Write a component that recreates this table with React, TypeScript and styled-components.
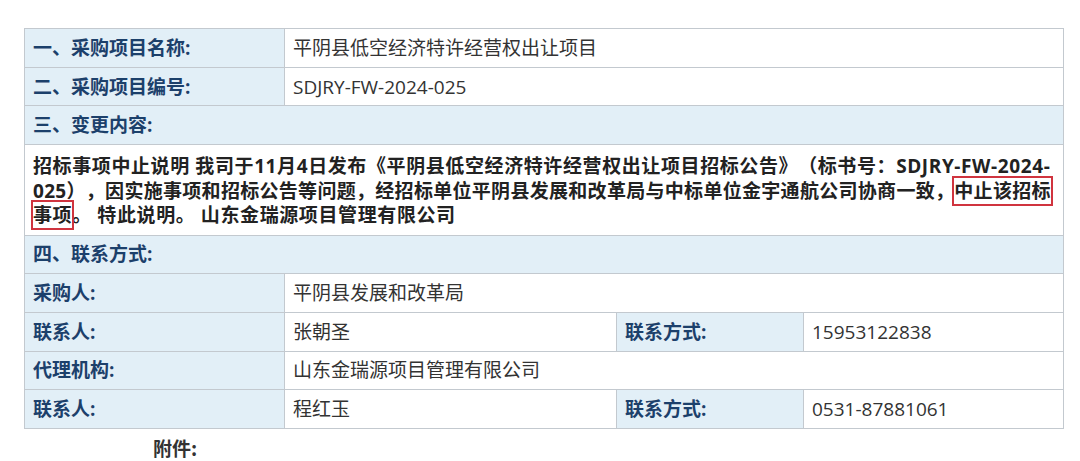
import React from "react";
import styled, { createGlobalStyle } from "styled-components";

const Global = createGlobalStyle`
  html, body { margin: 0; padding: 0; background: #ffffff; }
  body {
    font-family: "Open Sans", "Noto Sans CJK SC", sans-serif;
    text-spacing-trim: space-all;
  }
`;

const Page = styled.div`
  padding: 28px 18px 0 24px;
`;

const Table = styled.table`
  width: 1039px;
  border-collapse: collapse;
  table-layout: fixed;
  font-size: 19px;
`;

const Cell = styled.td<{ $label?: boolean }>`
  border: 1px solid #c3c9cf;
  height: 38.7px;
  padding: 0 8px;
  box-sizing: border-box;
  line-height: 24px;
  vertical-align: middle;
  background: ${(p) => (p.$label ? "#e2eff7" : "#ffffff")};
  color: ${(p) => (p.$label ? "#1c406b" : "#333333")};
  font-weight: ${(p) => (p.$label ? 700 : 400)};
  white-space: nowrap;
`;

const BodyCell = styled.td`
  border: 1px solid #c3c9cf;
  padding: 9px 0 7px 8px;
  line-height: 24.5px;
  color: #222222;
  font-weight: 700;
  background: #ffffff;
  white-space: nowrap;
  overflow: hidden;
`;

const Line = styled.div<{ $spacing: number }>`
  letter-spacing: ${(p) => p.$spacing}px;
`;

const Mark = styled.span`
  outline: 2px solid #d0343f;
  outline-offset: 0px;
`;

const Attach = styled.div`
  padding: 5px 0 0 129px;
  font-size: 19px;
  font-weight: 700;
  color: #333333;
  font-family: "Noto Sans CJK SC", sans-serif;
`;

export default function App() {
  return (
    <>
      <Global />
      <Page>
        <Table>
          <colgroup>
            <col style={{ width: 260 }} />
            <col style={{ width: 332 }} />
            <col style={{ width: 187 }} />
            <col style={{ width: 260 }} />
          </colgroup>
          <tbody>
            <tr>
              <Cell $label>一、采购项目名称:</Cell>
              <Cell colSpan={3}>平阴县低空经济特许经营权出让项目</Cell>
            </tr>
            <tr>
              <Cell $label>二、采购项目编号:</Cell>
              <Cell colSpan={3}>SDJRY-FW-2024-025</Cell>
            </tr>
            <tr>
              <Cell $label colSpan={4}>三、变更内容:</Cell>
            </tr>
            <tr>
              <BodyCell colSpan={4}>
                <Line $spacing={0.6}>
                  招标事项中止说明 我司于11月4日发布《平阴县低空经济特许经营权出让项目招标公告》（标书号：SDJRY-FW-2024-
                </Line>
                <Line $spacing={0.3}>
                  025），因实施事项和招标公告等问题，经招标单位平阴县发展和改革局与中标单位金宇通航公司协商一致，<Mark>中止该招标</Mark>
                </Line>
                <Line $spacing={0.6}>
                  <Mark>事项</Mark>。 特此说明。 山东金瑞源项目管理有限公司
                </Line>
              </BodyCell>
            </tr>
            <tr>
              <Cell $label colSpan={4}>四、联系方式:</Cell>
            </tr>
            <tr>
              <Cell $label>采购人:</Cell>
              <Cell colSpan={3}>平阴县发展和改革局</Cell>
            </tr>
            <tr>
              <Cell $label>联系人:</Cell>
              <Cell>张朝圣</Cell>
              <Cell $label>联系方式:</Cell>
              <Cell>15953122838</Cell>
            </tr>
            <tr>
              <Cell $label>代理机构:</Cell>
              <Cell colSpan={3}>山东金瑞源项目管理有限公司</Cell>
            </tr>
            <tr>
              <Cell $label>联系人:</Cell>
              <Cell>程红玉</Cell>
              <Cell $label>联系方式:</Cell>
              <Cell>0531-87881061</Cell>
            </tr>
          </tbody>
        </Table>
        <Attach>附件:</Attach>
      </Page>
    </>
  );
}
